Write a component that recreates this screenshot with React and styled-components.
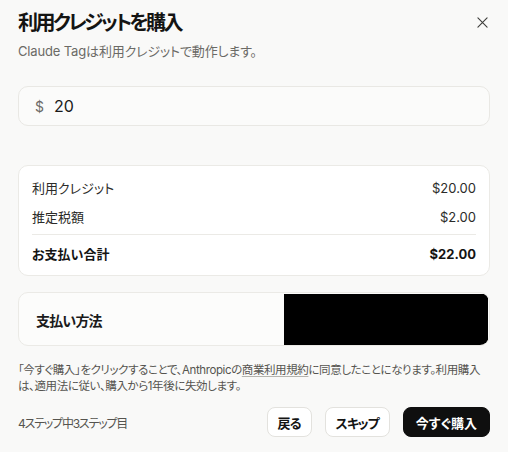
import React from 'react';
import styled, { createGlobalStyle } from 'styled-components';

const GlobalStyle = createGlobalStyle`
  * { box-sizing: border-box; }
  body {
    margin: 0;
    background: #f9f9f8;
    font-family: "Inter", "Noto Sans CJK JP", sans-serif;
    font-feature-settings: "palt" 1;
    color: #1a1a1a;
  }
`;

const Dialog = styled.div`
  width: 508px;
  height: 452px;
  padding: 9px 18px 0 18px;
  display: flex;
  flex-direction: column;
`;

const Header = styled.div`
  display: flex;
  justify-content: space-between;
  align-items: flex-start;
`;

const Title = styled.h2`
  margin: 0;
  font-size: 20px;
  font-weight: 700;
  letter-spacing: -2.6px;
  line-height: 28px;
  color: #141413;
`;

const Subtitle = styled.p`
  margin: 5px 0 0 0;
  font-size: 13px;
  letter-spacing: -0.15px;
  line-height: 18px;
  color: #6b6a66;
`;

const CloseButton = styled.button`
  border: none;
  background: none;
  padding: 0;
  margin: 5px 0 0 0;
  width: 16px;
  height: 16px;
  display: flex;
  align-items: center;
  justify-content: center;
  color: #3d3d3a;
`;

const AmountField = styled.div`
  margin-top: 26px;
  height: 40px;
  border: 1px solid #e9e8e4;
  border-radius: 10px;
  background: #fbfbfa;
  display: flex;
  align-items: center;
  padding: 0 16px;
  gap: 10px;
`;

const Currency = styled.span`
  font-size: 14px;
  color: #6b6a66;
`;

const AmountInput = styled.input`
  border: none;
  background: transparent;
  outline: none;
  font-family: inherit;
  font-size: 16px;
  color: #1a1a1a;
  padding: 0;
  flex: 1;
`;

const Card = styled.div`
  background: ${p => (p.$muted ? '#fcfcfb' : '#ffffff')};
  border: 1px solid #ebeae6;
  border-radius: 10px;
`;

const Summary = styled(Card)`
  margin-top: 39px;
  padding: 7px 13px 7px 13px;
  display: flex;
  flex-direction: column;
`;

const Row = styled.div`
  display: flex;
  justify-content: space-between;
  align-items: center;
  height: 29px;
  font-size: 13px;
  font-weight: ${p => (p.$total ? 700 : 400)};
  color: ${p => (p.$total ? '#141413' : '#2b2b29')};
`;

const Divider = styled.div`
  height: 1px;
  background: #ebeae6;
  margin: 3px 0 4px 0;
`;

const Payment = styled(Card)`
  margin-top: 16px;
  height: 54px;
  display: flex;
  align-items: stretch;
  justify-content: space-between;
  padding: 1px 1px 0 17px;
  overflow: hidden;
`;

const PaymentLabel = styled.div`
  display: flex;
  align-items: center;
  font-size: 14px;
  font-weight: 700;
  letter-spacing: -0.8px;
`;

const Redacted = styled.div`
  width: 204px;
  background: #000;
`;

const Terms = styled.p`
  margin: 16px 0 0 0;
  font-size: 11.5px;
  letter-spacing: -0.4px;
  line-height: 16px;
  color: #55544f;
`;

const TermsLink = styled.a`
  color: inherit;
  text-decoration: underline;
  text-decoration-color: #b5b4ae;
  text-underline-offset: 2px;
`;

const Footer = styled.div`
  margin-top: 13px;
  display: flex;
  align-items: center;
  justify-content: space-between;
`;

const Step = styled.span`
  font-size: 12px;
  letter-spacing: -1.2px;
  color: #55544f;
`;

const Actions = styled.div`
  display: flex;
  gap: 13px;
`;

const Button = styled.button`
  height: 30px;
  padding: 0 ${p => (p.$primary ? '12px' : '10px')};
  border-radius: 8px;
  font-family: inherit;
  font-feature-settings: "palt" 1;
  font-size: 13px;
  font-weight: 700;
  letter-spacing: ${p => (p.$primary ? '0' : '-1px')};
  border: 1px solid ${p => (p.$primary ? '#0f0f0f' : '#e3e2de')};
  background: ${p => (p.$primary ? '#0f0f0f' : '#ffffff')};
  color: ${p => (p.$primary ? '#ffffff' : '#141413')};
`;

const App = () => {
  return (
    <>
      <GlobalStyle />
      <Dialog>
        <Header>
          <div>
            <Title>利用クレジットを購入</Title>
            <Subtitle>Claude Tagは利用クレジットで動作します。</Subtitle>
          </div>
          <CloseButton aria-label="閉じる">
            <svg width="11" height="11" viewBox="0 0 12 12" fill="none" stroke="currentColor" strokeWidth="1.2" strokeLinecap="round">
              <path d="M1 1L11 11M11 1L1 11" />
            </svg>
          </CloseButton>
        </Header>

        <AmountField>
          <Currency>$</Currency>
          <AmountInput defaultValue="20" />
        </AmountField>

        <Summary>
          <Row>
            <span>利用クレジット</span>
            <span>$20.00</span>
          </Row>
          <Row>
            <span>推定税額</span>
            <span>$2.00</span>
          </Row>
          <Divider />
          <Row $total>
            <span>お支払い合計</span>
            <span>$22.00</span>
          </Row>
        </Summary>

        <Payment $muted>
          <PaymentLabel>支払い方法</PaymentLabel>
          <Redacted />
        </Payment>

        <Terms>
          「今すぐ購入」をクリックすることで、Anthropicの<TermsLink>商業利用規約</TermsLink>に同意したことになります。利用購入は、適用法に従い、購入から1年後に失効します。
        </Terms>

        <Footer>
          <Step>4ステップ中3ステップ目</Step>
          <Actions>
            <Button>戻る</Button>
            <Button>スキップ</Button>
            <Button $primary>今すぐ購入</Button>
          </Actions>
        </Footer>
      </Dialog>
    </>
  );
};

export default App;
